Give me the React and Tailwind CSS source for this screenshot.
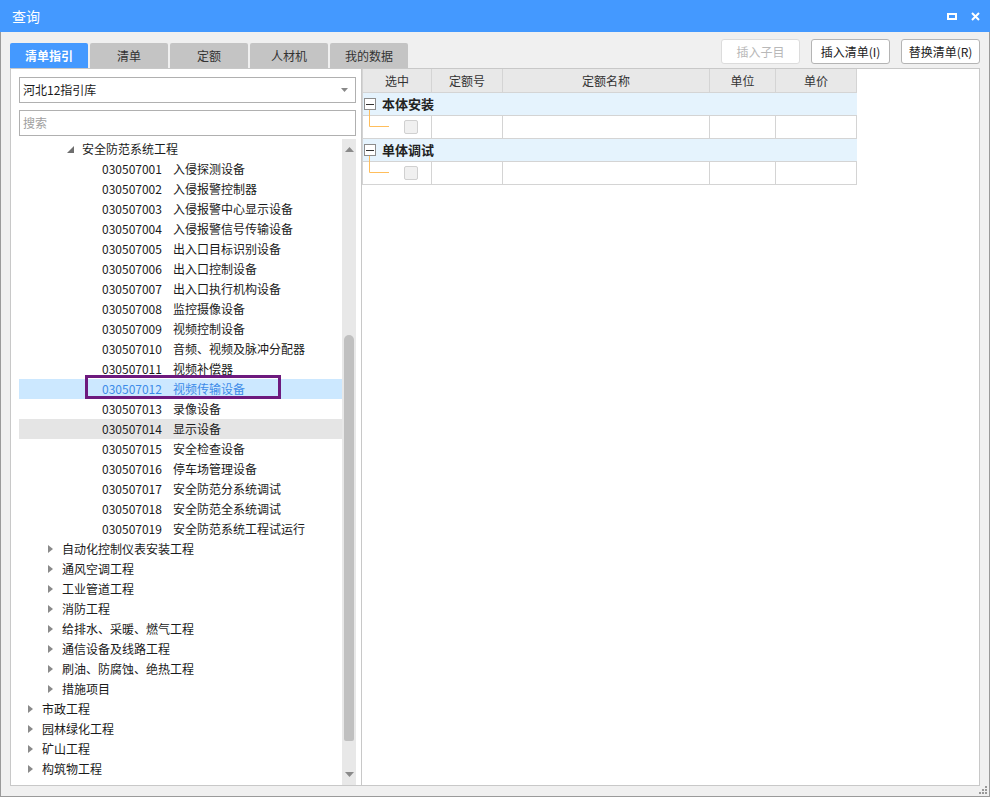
import { useState } from "react";

const FONT = "font-['Microsoft_YaHei','Noto_Sans_CJK_SC',sans-serif]";

const items = [
  ["030507001", "入侵探测设备"],
  ["030507002", "入侵报警控制器"],
  ["030507003", "入侵报警中心显示设备"],
  ["030507004", "入侵报警信号传输设备"],
  ["030507005", "出入口目标识别设备"],
  ["030507006", "出入口控制设备"],
  ["030507007", "出入口执行机构设备"],
  ["030507008", "监控摄像设备"],
  ["030507009", "视频控制设备"],
  ["030507010", "音频、视频及脉冲分配器"],
  ["030507011", "视频补偿器"],
  ["030507012", "视频传输设备"],
  ["030507013", "录像设备"],
  ["030507014", "显示设备"],
  ["030507015", "安全检查设备"],
  ["030507016", "停车场管理设备"],
  ["030507017", "安全防范分系统调试"],
  ["030507018", "安全防范全系统调试"],
  ["030507019", "安全防范系统工程试运行"],
];

const level1 = [
  "自动化控制仪表安装工程",
  "通风空调工程",
  "工业管道工程",
  "消防工程",
  "给排水、采暖、燃气工程",
  "通信设备及线路工程",
  "刷油、防腐蚀、绝热工程",
  "措施项目",
];

const level0 = ["市政工程", "园林绿化工程", "矿山工程", "构筑物工程"];

const tabs = ["清单指引", "清单", "定额", "人材机", "我的数据"];

const Collapsed = () => (
  <svg width="5" height="8" viewBox="0 0 5 8" className="mr-[9px] shrink-0">
    <path d="M0 0 L5 4 L0 8 Z" fill="#8a8a8a" />
  </svg>
);

const Expanded = () => (
  <svg width="7" height="7" viewBox="0 0 7 7" className="mr-[8px] shrink-0">
    <path d="M7 0 L7 7 L0 7 Z" fill="#6e6e6e" />
  </svg>
);

const TreeRow = ({ children, indent, className = "" }) => (
  <div
    className={`h-5 flex items-center text-[12px] leading-5 whitespace-nowrap ${indent} ${className}`}
  >
    {children}
  </div>
);

const GroupRow = ({ title }) => (
  <>
    <div className="h-[23px] bg-[#e5f3fd] border-b border-[#d4d4d4] flex items-center relative">
      <div className="ml-[1px] w-[12px] h-[12px] border border-[#8c8c8c] bg-white flex items-center justify-center">
        <div className="w-[8px] h-[1px] bg-[#333]" />
      </div>
      <span className="ml-[6px] text-[13px] font-bold text-[#222]">{title}</span>
    </div>
    <div className="h-[23px] flex border-b border-[#d4d4d4] relative">
      <div className="w-[69px] border-r border-[#d4d4d4] relative">
        {/* tree connector */}
        <svg
          width="20"
          height="18"
          viewBox="0 0 20 18"
          className="absolute z-10 left-[6px] top-[-6px]"
        >
          <path d="M0.5 0 V16.5 H20" fill="none" stroke="#ffbe5c" strokeWidth="1" />
        </svg>
        <div className="absolute left-[41px] top-[4px] w-[14px] h-[14px] rounded-[2px] border border-[#d0d0d0] bg-[#f0f0f0]" />
      </div>
      <div className="w-[71px] border-r border-[#d4d4d4]" />
      <div className="w-[207px] border-r border-[#d4d4d4]" />
      <div className="w-[66px] border-r border-[#d4d4d4]" />
      <div className="w-[81px] border-r border-[#d4d4d4]" />
    </div>
  </>
);

export default function App() {
  const [active, setActive] = useState(0);

  return (
    <div
      className={`w-[990px] h-[797px] bg-[#f0f0f0] border-x border-b border-[#9a9a9a] flex flex-col ${FONT}`}
    >
      {/* title bar */}
      <div className="h-[32px] bg-[#4499ff] flex items-center pl-[12px] pr-[10px] shrink-0 -mx-px">
        <span className="text-white text-[14px] leading-none">查询</span>
        <div className="ml-auto flex items-center gap-[14px]">
          <div className="w-[10px] h-[7px] border-2 border-white" />
          <svg width="9" height="9" viewBox="0 0 9 9">
            <path d="M1 1 L8 8 M8 1 L1 8" stroke="white" strokeWidth="2" />
          </svg>
        </div>
      </div>

      {/* tabs + buttons */}
      <div className="h-[36px] flex pl-[9px] pr-[9px] shrink-0">
        <div className="flex items-end gap-[2px]">
          {tabs.map((t, i) => (
            <button
              key={t}
              onClick={() => setActive(i)}
              className={`w-[78px] h-[25px] rounded-t-[2px] text-[12px] leading-none flex items-center justify-center ${
                active === i
                  ? "bg-[#4499ff] text-white font-bold"
                  : "bg-[#c4c4c4] text-[#333]"
              }`}
            >
              {t}
            </button>
          ))}
        </div>
        <div className="ml-auto flex items-start gap-[11px] pt-[7px]">
          <button className="w-[79px] h-[25px] rounded-[3px] border border-[#dcdcdc] bg-white text-[12px] text-[#b8b8b8]">
            插入子目
          </button>
          <button className="w-[79px] h-[25px] rounded-[3px] border border-[#b4b4b4] bg-white text-[12px] text-[#222]">
            插入清单(I)
          </button>
          <button className="w-[79px] h-[25px] rounded-[3px] border border-[#b4b4b4] bg-white text-[12px] text-[#222]">
            替换清单(R)
          </button>
        </div>
      </div>

      {/* main */}
      <div className="h-[718px] flex pl-[9px] shrink-0">
        {/* left panel */}
        <div className="w-[352px] border border-[#c8c8c8] bg-white flex flex-col pl-[8px] pr-[5px] pt-[8px]">
          <div className="h-[26px] border border-[#b0b0b0] flex items-center pl-[3px] pr-[7px] text-[12px] text-[#1a1a1a]">
            <span>河北12指引库</span>
            <svg width="7" height="4" viewBox="0 0 7 4" className="ml-auto">
              <path d="M0 0 L7 0 L3.5 4 Z" fill="#888" />
            </svg>
          </div>
          <div className="mt-[7px] h-[26px] border border-[#b0b0b0] flex items-center pl-[3px] text-[12px] text-[#a0a0a0]">
            搜索
          </div>
          <div className="mt-[3px] flex flex-1 min-h-0">
            <div className="flex-1 relative overflow-hidden text-[#1a1a1a]">
              <TreeRow indent="pl-[48px]">
                <Expanded />
                安全防范系统工程
              </TreeRow>
              {items.map(([code, name]) => (
                <TreeRow
                  key={code}
                  indent="pl-[83px]"
                  className={
                    code === "030507012"
                      ? "bg-[#cce8ff] text-[#3d8be8]"
                      : code === "030507014"
                      ? "bg-[#e5e5e5]"
                      : ""
                  }
                >
                  <span className="w-[71px] inline-block">{code}</span>
                  <span>{name}</span>
                </TreeRow>
              ))}
              {level1.map((t) => (
                <TreeRow key={t} indent="pl-[29px]">
                  <Collapsed />
                  {t}
                </TreeRow>
              ))}
              {level0.map((t) => (
                <TreeRow key={t} indent="pl-[9px]">
                  <Collapsed />
                  {t}
                </TreeRow>
              ))}
              <div className="absolute left-[66px] top-[236px] w-[196px] h-[24px] border-[3px] border-[#6d1a7e]" />
            </div>
            {/* scrollbar */}
            <div className="w-[14px] bg-[#e8e8e8] flex flex-col items-center">
              <svg width="9" height="5" viewBox="0 0 9 5" className="mt-[8px]">
                <path d="M0 5 L4.5 0 L9 5 Z" fill="#8a8a8a" />
              </svg>
              <div className="mt-[183px] w-[10px] h-[406px] rounded-t-[5px] rounded-b-[2px] bg-[#c0c0c0]" />
              <svg width="9" height="5" viewBox="0 0 9 5" className="mt-auto mb-[8px]">
                <path d="M0 0 L9 0 L4.5 5 Z" fill="#8a8a8a" />
              </svg>
            </div>
          </div>
        </div>

        {/* right panel */}
        <div className="w-[618px] border border-l-0 border-[#c8c8c8] bg-white">
          <div className="w-[495px] border-l border-[#d4d4d4] text-[12px] text-[#333]">
            <div className="h-[24px] flex bg-[#e8e8e8] border-b border-[#d4d4d4]">
              <div className="w-[69px] border-r border-[#d4d4d4] flex items-center justify-center">选中</div>
              <div className="w-[71px] border-r border-[#d4d4d4] flex items-center justify-center">定额号</div>
              <div className="w-[207px] border-r border-[#d4d4d4] flex items-center justify-center">定额名称</div>
              <div className="w-[66px] border-r border-[#d4d4d4] flex items-center justify-center">单位</div>
              <div className="w-[81px] border-r border-[#d4d4d4] flex items-center justify-center">单价</div>
            </div>
            <GroupRow title="本体安装" />
            <GroupRow title="单体调试" />
          </div>
        </div>
      </div>

      {/* resize grip */}
      <div className="flex-1 flex justify-end items-end pr-[2px] pb-[3px]">
        <div className="grid grid-cols-3 gap-[1px]">
          <span className="w-[2px] h-[2px]" />
          <span className="w-[2px] h-[2px]" />
          <span className="w-[2px] h-[2px] bg-[#999]" />
          <span className="w-[2px] h-[2px]" />
          <span className="w-[2px] h-[2px] bg-[#999]" />
          <span className="w-[2px] h-[2px] bg-[#999]" />
          <span className="w-[2px] h-[2px] bg-[#999]" />
          <span className="w-[2px] h-[2px] bg-[#999]" />
          <span className="w-[2px] h-[2px] bg-[#999]" />
        </div>
      </div>
    </div>
  );
}
